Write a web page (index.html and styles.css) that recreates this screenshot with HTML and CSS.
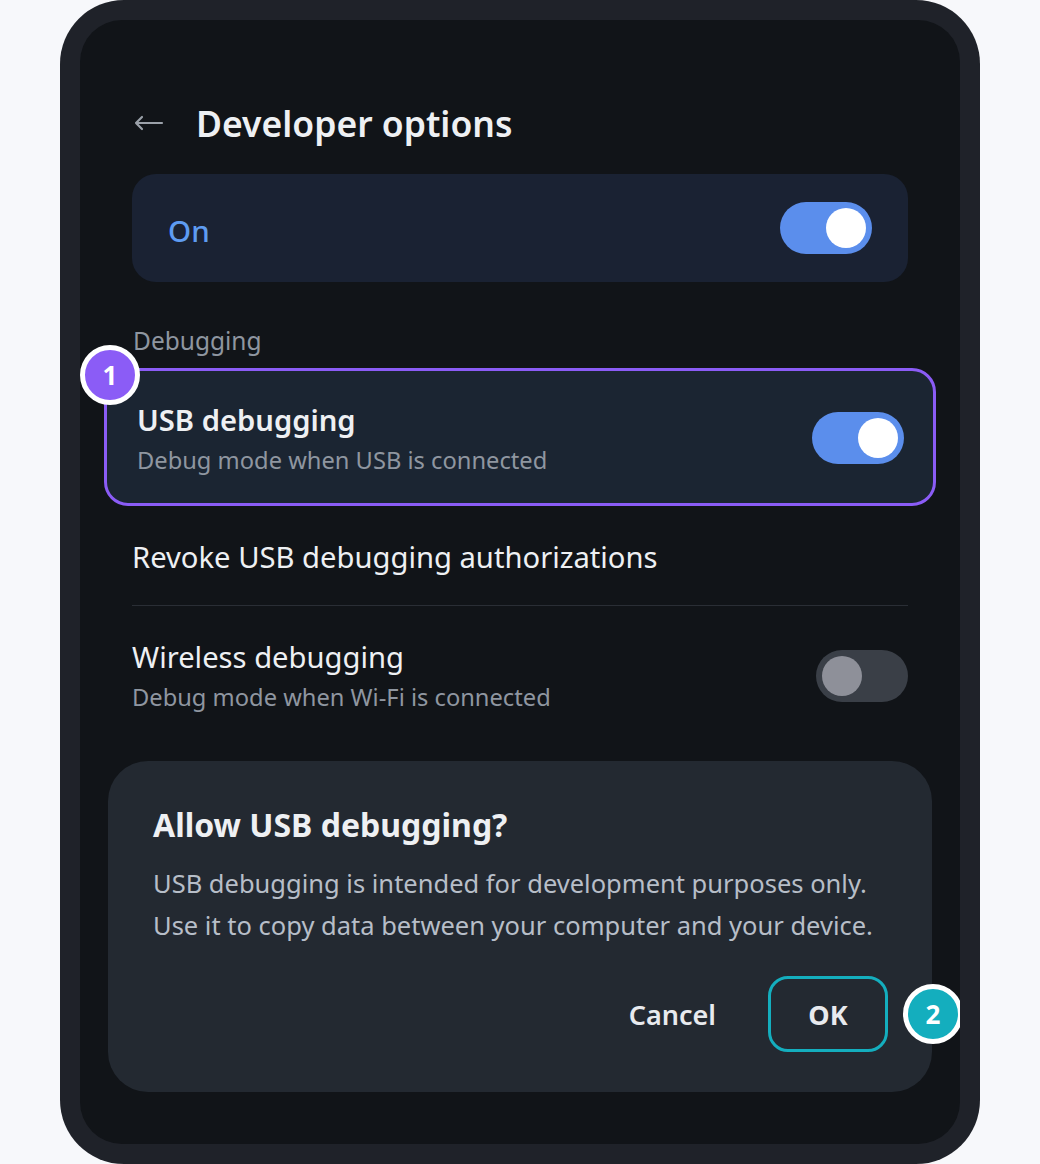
FILE: index.html
```html
<!DOCTYPE html>
<html lang="en">
<head>
  <meta charset="UTF-8"/>
  <meta name="viewport" content="width=device-width, initial-scale=1.0"/>
  <title>Developer options</title>
  <link rel="stylesheet" href="styles.css">
</head>
<body>
  <div class="phone">
    <div class="screen">
      <div class="header">
        <svg class="back" width="30" height="16" viewBox="0 0 30 16">
          <path d="M2 8 H28 M8 2 L2 8 L8 14" fill="none" stroke="#9ba1a9" stroke-width="2.2" stroke-linecap="round" stroke-linejoin="round"/>
        </svg>
        <h1>Developer options</h1>
      </div>

      <div class="master">
        <span class="master-label">On</span>
        <div class="toggle on"><span class="knob"></span></div>
      </div>

      <div class="section-label">Debugging</div>

      <div class="row highlight">
        <span class="badge purple">1</span>
        <div class="row-text">
          <div class="row-title strong">USB debugging</div>
          <div class="row-sub">Debug mode when USB is connected</div>
        </div>
        <div class="toggle on"><span class="knob"></span></div>
      </div>

      <div class="row plain divided">
        <div class="row-title">Revoke USB debugging authorizations</div>
      </div>

      <div class="row plain">
        <div class="row-text">
          <div class="row-title">Wireless debugging</div>
          <div class="row-sub">Debug mode when Wi-Fi is connected</div>
        </div>
        <div class="toggle"><span class="knob"></span></div>
      </div>

      <div class="dialog">
        <h2>Allow USB debugging?</h2>
        <p>USB debugging is intended for development purposes only.<br>Use it to copy data between your computer and your device.</p>
        <div class="actions">
          <button class="btn">Cancel</button>
          <div class="ok-wrap">
            <button class="btn ok">OK</button>
            <span class="badge teal">2</span>
          </div>
        </div>
      </div>
    </div>
  </div>
</body>
</html>
```

FILE: styles.css
```css
:root {
  --page: #f7f8fb;
  --frame: #1f2229;
  --screen: #111418;
  --card: #1a2233;
  --card-hl: #1b2532;
  --dialog: #232931;
  --text: #eef0f3;
  --muted: #8f96a0;
  --body: #b7bec8;
  --blue: #5b8eec;
  --purple: #8b5cf6;
  --teal: #14aebe;
}

body {
  margin: 0;
  background: var(--page);
  font-family: 'Noto Sans', 'Open Sans', sans-serif;
  color: var(--text);
}

.phone {
  width: 920px;
  height: 1164px;
  margin: 0 auto;
  padding: 20px;
  box-sizing: border-box;
  background: var(--frame);
  border-radius: 64px;
}

.screen {
  height: 100%;
  background: var(--screen);
  border-radius: 42px;
  overflow: hidden;
  display: flex;
  flex-direction: column;
  padding: 73px 52px 52px;
  box-sizing: border-box;
}

.header {
  display: flex;
  align-items: center;
  height: 60px;
}

.back {
  margin-left: 2px;
  margin-right: 32px;
}

h1 {
  margin: 0;
  font-size: 35.5px;
  font-weight: 600;
  color: var(--text);
}

.master {
  margin-top: 21px;
  height: 108px;
  background: var(--card);
  border-radius: 24px;
  display: flex;
  align-items: center;
  justify-content: space-between;
  padding: 0 36px;
}

.master-label {
  font-size: 29.5px;
  font-weight: 500;
  color: #5e9cf2;
  margin-top: 4px;
}

.toggle {
  width: 92px;
  height: 52px;
  border-radius: 26px;
  background: #3a3f47;
  display: flex;
  align-items: center;
  padding: 0 6px;
  box-sizing: border-box;
  flex-shrink: 0;
}

.toggle .knob {
  width: 40px;
  height: 40px;
  border-radius: 50%;
  background: #8e9099;
}

.toggle.on {
  background: var(--blue);
  justify-content: flex-end;
}

.toggle.on .knob {
  background: #fff;
}

.section-label {
  margin-top: 43px;
  font-size: 24.5px;
  line-height: 32px;
  color: var(--muted);
  padding-left: 1px;
}

.row {
  display: flex;
  align-items: center;
  justify-content: space-between;
}

.row-title {
  font-size: 29.2px;
  line-height: 38px;
  color: var(--text);
}

.row-title.strong {
  font-weight: 600;
}

.row-sub {
  margin-top: 5px;
  font-size: 23.7px;
  line-height: 32px;
  color: var(--muted);
}

.highlight {
  position: relative;
  margin: 11px -28px 0;
  padding: 30px 29px 27px 30px;
  background: var(--card-hl);
  border: 3px solid var(--purple);
  border-radius: 24px;
}

.highlight .toggle {
  margin-top: -2px;
}

.plain {
  padding: 32px 0 29px 0;
}

.divided {
  border-bottom: 1.5px solid #2a2e35;
}

.badge {
  position: absolute;
  width: 50px;
  height: 50px;
  border: 5px solid #fff;
  border-radius: 50%;
  display: flex;
  align-items: center;
  justify-content: center;
  color: #fff;
  font-size: 26px;
  font-weight: 700;
}

.badge.purple {
  background: var(--purple);
  left: -27px;
  top: -26px;
}

.badge.teal {
  background: var(--teal);
  left: calc(100% + 15px);
  top: 8px;
}

.dialog {
  margin: auto -24px 0;
  background: var(--dialog);
  border-radius: 40px;
  padding: 42px 44px 40px 45px;
}

h2 {
  margin: 0;
  font-size: 32px;
  line-height: 44px;
  font-weight: 700;
  color: var(--text);
}

.dialog p {
  margin: 15px 0 0;
  font-size: 25.5px;
  line-height: 42px;
  color: var(--body);
}

.actions {
  margin-top: 30px;
  display: flex;
  justify-content: flex-end;
  align-items: center;
  gap: 25px;
}

.ok-wrap {
  position: relative;
}

.btn {
  background: none;
  border: 3px solid transparent;
  font-family: inherit;
  font-size: 27px;
  font-weight: 600;
  color: #e8eaee;
  height: 76px;
  padding: 0 24px;
  border-radius: 20px;
}

.btn.ok {
  width: 120px;
  border-color: var(--teal);
  font-weight: 700;
}
```
